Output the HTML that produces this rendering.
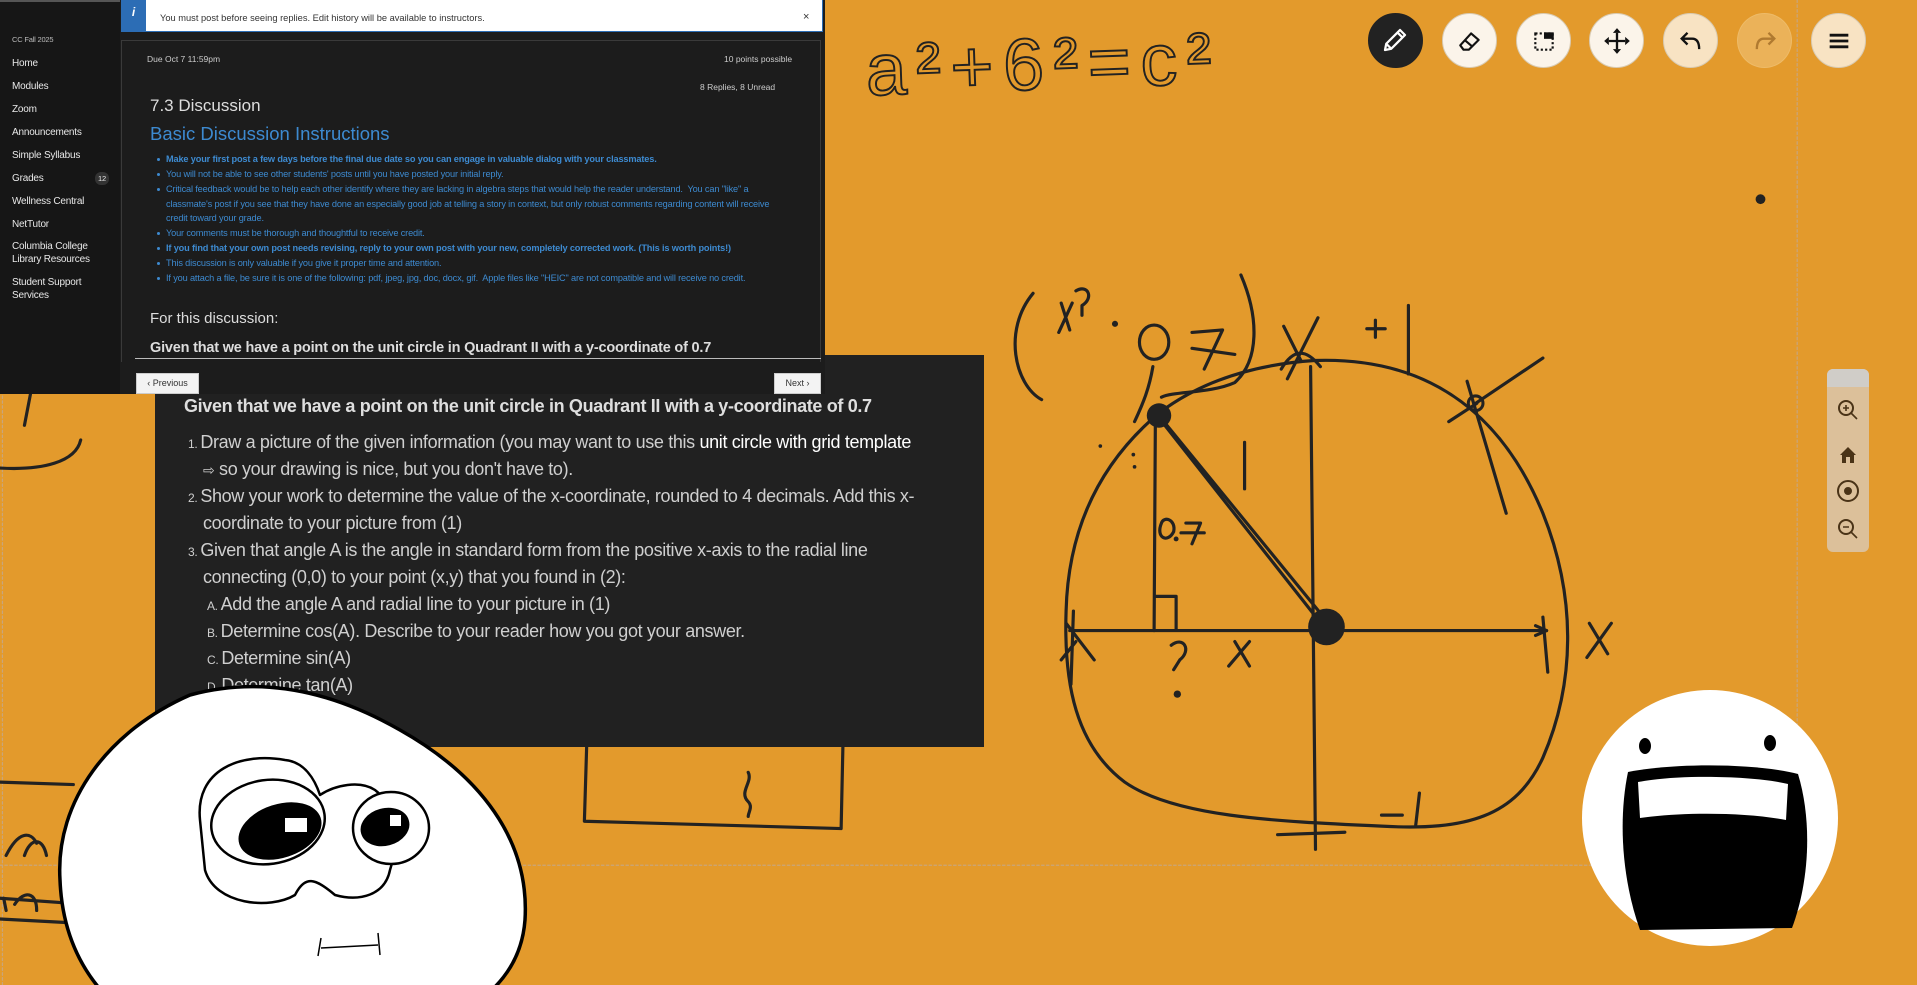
<!DOCTYPE html>
<html><head><meta charset="utf-8">
<style>
*{margin:0;padding:0;box-sizing:border-box}
html,body{width:1917px;height:985px;overflow:hidden;background:#e39a2c;font-family:"Liberation Sans",sans-serif}
.abs{position:absolute}
#top{left:0;top:0;width:825px;height:394px;background:#1c1c1c;z-index:3}
#side{left:0;top:0;width:120px;height:394px;background:#161616;border-top:2px solid #555}
#side div{position:absolute;left:12px;color:#e8e8e8;font-size:10px;line-height:13px;letter-spacing:-0.2px}
.bul{position:absolute;left:166px;width:625px;color:#3d8ad0;font-size:9.2px;line-height:14.5px;letter-spacing:-0.15px}
.bul:before{content:"";position:absolute;left:-9px;top:6px;width:3px;height:3px;border-radius:50%;background:#3d8ad0}
#q{left:155px;top:355px;width:829px;height:392px;background:#212121;color:#cfcfcf;z-index:2}
#q .l{position:absolute;font-size:18px;letter-spacing:-0.35px;white-space:nowrap}
#q .n{font-size:12px;margin-right:3px}
#faces{z-index:4}
.tb{position:absolute;top:13px;width:55px;height:55px;border-radius:50%;border:1px solid #d9cbb3}
</style></head><body>
<svg class="abs" style="left:0;top:0" width="1917" height="985" viewBox="0 0 1568 806" preserveAspectRatio="none">
<g fill="none" stroke="#222" stroke-width="2.6" stroke-linecap="round" stroke-linejoin="round">
<line x1="1470" y1="0" x2="1470" y2="708" stroke="#c9a57a" stroke-width="1" stroke-dasharray="2 2"/>
<line x1="0" y1="708" x2="1470" y2="708" stroke="#c9a57a" stroke-width="1" stroke-dasharray="2 2"/>
<line x1="2" y1="0" x2="2" y2="806" stroke="#c9a57a" stroke-width="1" stroke-dasharray="2 2"/>
<path d="M25 322 L20 348"/><path d="M0 383 C35 385 62 378 66 360"/>
<path d="M0 640 L60 642"/><path d="M0 735 L70 740"/><path d="M0 752 L75 756"/>
<path d="M5 700 C15 680 25 680 30 690 M20 700 C25 685 35 685 38 700"/>
<path d="M5 745 L3 735 M12 740 C20 728 30 730 30 745"/>
<path d="M482 540 L478 672 L688 678 L690 585"/>
<path d="M612 632 C616 640 604 648 612 656 C616 660 612 665 612 668"/>
<path d="M1075 295 C1160 292 1225 330 1262 420 C1290 490 1288 560 1262 620 C1240 668 1200 680 1130 676 C1040 672 960 668 920 640 C880 610 870 560 872 500 C874 420 910 370 948 338 C985 310 1030 298 1075 295 Z"/>
<path d="M1072 300 L1076 695"/>
<path d="M875 516 L1265 516"/><path d="M1262 505 L1266 550"/><path d="M1256 512 L1265 516 L1256 520"/>
<path d="M1045 683 L1100 681 M1130 667 L1147 667 M1161 649 L1158 675"/>
<path d="M948 342 L1082 512 M952 345 L1090 514"/>
<path d="M945 348 L944 516 M945 488 L962 488 L962 515"/>
<path d="M1018 362 L1018 400"/>
<path d="M1207 330 L1262 293 M1208 330 L1185 345 M1200 312 L1232 420"/>
<path d="M878 500 L876 560 M872 510 L895 540 M880 525 L868 540"/>
<path d="M845 240 C820 270 830 315 852 327"/>
<path d="M1015 225 C1030 260 1030 295 1010 313 C990 322 960 320 950 325"/>
<path d="M928 345 C935 330 940 318 943 300"/>
<path d="M868 248 L875 270 M877 248 L866 272 M880 238 C890 232 895 244 885 250 L885 258"/>
<ellipse cx="944" cy="280" rx="12" ry="14"/><path d="M975 272 L1000 270 L985 302 M975 285 L1010 290"/>
<path d="M1050 267 L1064 295 M1078 260 L1053 310 M1048 302 C1058 285 1068 285 1080 300"/>
<path d="M1118 269 L1133 269 M1125 262 L1125 276 M1152 250 L1152 306"/>
<path d="M1300 510 L1315 535 M1318 510 L1298 538"/>
<path d="M1010 525 L1022 545 M1022 525 L1005 545"/>
<path d="M958 528 C968 520 975 532 965 540 L960 548"/>
<path d="M950 428 C945 440 955 445 960 435 C962 425 952 422 950 428 Z M970 428 L982 428 L975 445 M966 436 L985 436"/>
</g>
<g fill="#222">
<circle cx="948" cy="340" r="10"/><circle cx="1085" cy="513" r="15"/><circle cx="1207" cy="330" r="6" fill="none" stroke="#222" stroke-width="2.5"/>
<circle cx="1440" cy="163" r="4"/><circle cx="912" cy="265" r="2.5"/><circle cx="963" cy="568" r="3"/><circle cx="962" cy="441" r="2"/>
<circle cx="900" cy="365" r="1.5"/><circle cx="927" cy="372" r="1.5"/><circle cx="928" cy="382" r="1.5"/>
</g>
<text x="708" y="72" font-family="Liberation Sans" font-size="60" fill="none" stroke="#222" stroke-width="1.6" letter-spacing="8" transform="rotate(-2 880 50)">a²+6²=c²</text>
</svg>

<div id="top" class="abs">
 <div id="side" class="abs">
  <div style="top:31px;font-size:7.5px;color:#bbb">CC Fall 2025</div>
  <div style="top:55px">Home</div><div style="top:78px">Modules</div><div style="top:101px">Zoom</div>
  <div style="top:124px">Announcements</div><div style="top:147px">Simple Syllabus</div>
  <div style="top:170px">Grades</div><div style="top:170px;left:95px;font-size:7.5px;background:#333;border-radius:6px;padding:0 3px">12</div>
  <div style="top:193px">Wellness Central</div><div style="top:216px">NetTutor</div>
  <div style="top:238px">Columbia College<br>Library Resources</div>
  <div style="top:274px">Student Support<br>Services</div>
 </div>
 <div class="abs" style="left:121px;top:0;width:702px;height:32px;background:#fff;border:1px solid #2c6db5;border-top:none"></div>
 <div class="abs" style="left:121px;top:0;width:25px;height:32px;background:#2c6db5;color:#fff;font-size:12px;font-style:italic;font-weight:bold;text-align:center;line-height:24px">i</div>
 <div class="abs" style="left:160px;top:13px;font-size:9.3px;color:#333">You must post before seeing replies. Edit history will be available to instructors.</div>
 <div class="abs" style="left:803px;top:11px;font-size:11px;color:#333">×</div>
 <div class="abs" style="left:121px;top:40px;width:700px;height:322px;border:1px solid #3a3a3a;border-bottom:none"></div>
 <div class="abs" style="left:135px;top:358px;width:686px;height:1px;background:#bbb"></div>
 <div class="abs" style="left:147px;top:54px;font-size:8.5px;color:#ccc">Due Oct 7 11:59pm</div>
 <div class="abs" style="left:724px;top:54px;font-size:8.5px;color:#ccc">10 points possible</div>
 <div class="abs" style="left:700px;top:82px;font-size:8.5px;color:#ccc">8 Replies, 8 Unread</div>
 <div class="abs" style="left:150px;top:96px;font-size:17px;color:#ddd">7.3 Discussion</div>
 <div class="abs" style="left:150px;top:123px;font-size:18.5px;color:#3d8ad0">Basic Discussion Instructions</div>
 <div class="bul" style="top:152px;font-weight:bold">Make your first post a few days before the final due date so you can engage in valuable dialog with your classmates.</div>
 <div class="bul" style="top:167px">You will not be able to see other students' posts until you have posted your initial reply.</div>
 <div class="bul" style="top:182px">Critical feedback would be to help each other identify where they are lacking in algebra steps that would help the reader understand.&nbsp; You can "like" a classmate's post if you see that they have done an especially good job at telling a story in context, but only robust comments regarding content will receive credit toward your grade.</div>
 <div class="bul" style="top:226px">Your comments must be thorough and thoughtful to receive credit.</div>
 <div class="bul" style="top:241px;font-weight:bold">If you find that your own post needs revising, reply to your own post with your new, completely corrected work. (This is worth points!)</div>
 <div class="bul" style="top:256px">This discussion is only valuable if you give it proper time and attention.</div>
 <div class="bul" style="top:271px">If you attach a file, be sure it is one of the following: pdf, jpeg, jpg, doc, docx, gif.&nbsp; Apple files like "HEIC" are not compatible and will receive no credit.</div>
 <div class="abs" style="left:150px;top:310px;font-size:15px;color:#ddd">For this discussion:</div>
 <div class="abs" style="left:150px;top:340px;font-size:14.5px;color:#ddd;font-weight:bold;letter-spacing:-0.2px">Given that we have a point on the unit circle in Quadrant II with a y-coordinate of 0.7</div>
 <div class="abs" style="left:136px;top:373px;width:63px;height:21px;background:#f3f3f3;border:1px solid #ccc;font-size:9px;color:#333;text-align:center;line-height:19px">‹ Previous</div>
 <div class="abs" style="left:774px;top:373px;width:47px;height:21px;background:#f3f3f3;border:1px solid #ccc;font-size:9px;color:#333;text-align:center;line-height:19px">Next ›</div>
</div>

<div id="q" class="abs">
 <div class="l" style="left:29px;top:41px;font-weight:bold;color:#dedede">Given that we have a point on the unit circle in Quadrant II with a y-coordinate of 0.7</div>
 <div class="l" style="left:33px;top:77px"><span class="n">1.</span>Draw a picture of the given information (you may want to use this <span style="color:#fff">unit circle with grid template</span></div>
 <div class="l" style="left:48px;top:104px"><span style="font-size:14px">⇨</span> so your drawing is nice, but you don't have to).</div>
 <div class="l" style="left:33px;top:131px"><span class="n">2.</span>Show your work to determine the value of the x-coordinate, rounded to 4 decimals. Add this x-</div>
 <div class="l" style="left:48px;top:158px">coordinate to your picture from (1)</div>
 <div class="l" style="left:33px;top:185px"><span class="n">3.</span>Given that angle A is the angle in standard form from the positive x-axis to the radial line</div>
 <div class="l" style="left:48px;top:212px">connecting (0,0) to your point (x,y) that you found in (2):</div>
 <div class="l" style="left:52px;top:239px"><span class="n">A.</span>Add the angle A and radial line to your picture in (1)</div>
 <div class="l" style="left:52px;top:266px"><span class="n">B.</span>Determine cos(A). Describe to your reader how you got your answer.</div>
 <div class="l" style="left:52px;top:293px"><span class="n">C.</span>Determine sin(A)</div>
 <div class="l" style="left:52px;top:320px"><span class="n">D.</span>Determine tan(A)</div>
 <div class="l" style="left:52px;top:347px"><span class="n">E.</span>Determine csc(A)</div>
</div>

<svg id="faces" class="abs" style="left:0;top:0" width="1917" height="985">
 <g stroke="#000" stroke-width="3.5" stroke-linejoin="round">
  <path d="M60 880 C55 800 110 730 190 695 C260 676 330 690 400 730 C480 775 530 840 525 920 C522 960 500 985 480 1000 L110 1000 C80 970 62 930 60 880 Z" fill="#fff"/>
  <path d="M200 820 C195 770 240 752 285 760 C305 762 315 780 320 795 C335 785 360 780 375 790 C395 805 400 840 390 870 C385 895 360 902 335 895 C315 878 305 875 295 895 C270 910 215 905 205 870 Z" fill="#fff" stroke-width="2.5"/>
  <ellipse cx="268" cy="822" rx="57" ry="42" transform="rotate(-8 268 822)" fill="#fff" stroke-width="2.5"/>
  <ellipse cx="391" cy="828" rx="38" ry="36" fill="#fff" stroke-width="2.5"/>
  <ellipse cx="280" cy="831" rx="41" ry="25" transform="rotate(-18 280 831)" fill="#000"/>
  <ellipse cx="385" cy="827" rx="23" ry="17" transform="rotate(-15 385 827)" fill="#000"/>
  <rect x="285" y="818" width="22" height="14" fill="#fff" stroke="none"/>
  <rect x="390" y="815" width="11" height="11" fill="#fff" stroke="none"/>
  <path d="M321 948 L378 945 M321 938 L318 956 M378 933 L380 955" fill="none" stroke-width="1.5"/>
 </g>
 <circle cx="1710" cy="818" r="128" fill="#fff"/>
 <ellipse cx="1645" cy="746" rx="6" ry="8" fill="#000"/><ellipse cx="1770" cy="743" rx="6" ry="8" fill="#000"/>
 <path d="M1628 772 C1680 762 1760 764 1798 774 C1812 820 1810 880 1792 928 L1640 930 C1622 880 1618 820 1628 772 Z" fill="#000"/>
 <path d="M1638 782 C1680 774 1755 776 1788 784 L1786 820 C1745 812 1680 812 1640 818 Z" fill="#fff"/>
</svg>

<div class="tb" style="left:1368px;background:#222;border-color:#222"></div>
<svg class="abs" style="left:1380px;top:25px" width="30" height="30" viewBox="0 0 24 24" fill="none" stroke="#fff" stroke-width="1.8" stroke-linejoin="round"><path d="M4 20 L5 15 L16 4 L20 8 L9 19 Z M14 6 L18 10 M5 15 L9 19"/></svg>
<div class="tb" style="left:1442px;background:#fbf4ea"></div>
<svg class="abs" style="left:1457px;top:28px" width="26" height="26" viewBox="0 0 24 24" fill="none" stroke="#111" stroke-width="2" stroke-linejoin="round"><path d="M6 20 L3 16 L13 5 L20 11 L11 20 Z M7 11 L14 17 M6 20 L11 20"/></svg>
<div class="tb" style="left:1516px;background:#fbf4ea"></div>
<svg class="abs" style="left:1531px;top:28px" width="26" height="26" viewBox="0 0 24 24" fill="none" stroke="#111" stroke-width="2" stroke-dasharray="2 2"><rect x="4" y="5" width="16" height="15"/><rect x="12" y="4" width="9" height="6" fill="#111" stroke="none"/></svg>
<div class="tb" style="left:1589px;background:#fbf4ea"></div>
<svg class="abs" style="left:1603px;top:27px" width="28" height="28" viewBox="0 0 24 24" fill="#111"><path d="M11 5h2v14h-2zM5 11h14v2H5z"/><path d="M12 1l3.5 4h-7zM12 23l3.5-4h-7zM1 12l4-3.5v7zM23 12l-4-3.5v7z"/></svg>
<div class="tb" style="left:1663px;background:#f8e3c3"></div>
<svg class="abs" style="left:1677px;top:27px" width="28" height="28" viewBox="0 0 24 24" fill="none" stroke="#111" stroke-width="2"><path d="M9 5 L4 10 L9 15 M4 10 H13 C17 10 19 13 19 19"/></svg>
<div class="tb" style="left:1737px;background:rgba(240,195,120,0.6);border-color:rgba(240,195,120,0.5)"></div>
<svg class="abs" style="left:1751px;top:27px" width="28" height="28" viewBox="0 0 24 24" fill="none" stroke="#b07a30" stroke-width="2"><path d="M15 5 L20 10 L15 15 M20 10 H11 C7 10 5 13 5 19"/></svg>
<div class="tb" style="left:1811px;background:#f8e3c3"></div>
<svg class="abs" style="left:1825px;top:27px" width="28" height="28" viewBox="0 0 24 24" stroke="#111" stroke-width="2.4"><path d="M4 7h16M4 12h16M4 17h16"/></svg>

<div class="abs" style="left:1827px;top:369px;width:42px;height:183px;border-radius:6px;background:#dcc09a;overflow:hidden">
 <div style="height:18px;background:#d0cdc8"></div>
</div>
<svg class="abs" style="left:1827px;top:369px" width="42" height="183" viewBox="0 0 42 183" fill="none" stroke="#4a3317" stroke-width="2">
 <circle cx="19" cy="39" r="7"/><path d="M24 44 L30 50 M16 39 h6 M19 36 v6" stroke-width="1.6"/>
 <path d="M13 86 L21 78 L29 86 L27 86 L27 94 L23 94 L23 88 L19 88 L19 94 L15 94 L15 86 Z" fill="#4a3317" stroke="none"/>
 <circle cx="21" cy="122" r="10"/><circle cx="21" cy="122" r="3" fill="#4a3317"/>
 <circle cx="19" cy="158" r="7"/><path d="M24 163 L30 169 M16 158 h6" stroke-width="1.6"/>
</svg>
</body></html>
